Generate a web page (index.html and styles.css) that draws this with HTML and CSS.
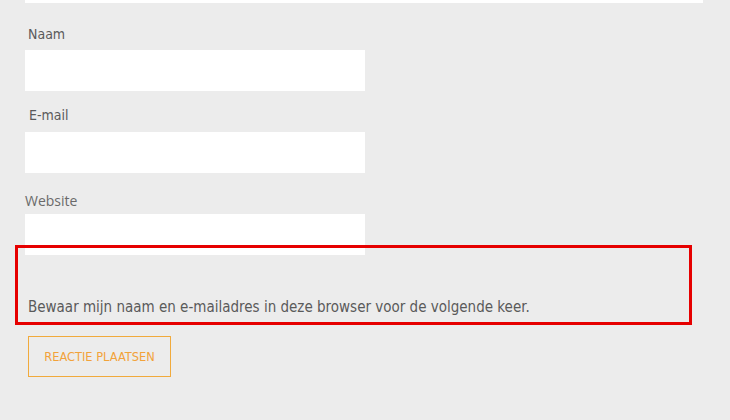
FILE: index.html
```html
<!DOCTYPE html>
<html lang="nl">
<head>
<meta charset="utf-8">
<link rel="stylesheet" href="styles.css">
<title>Reactie</title>
</head>
<body>
<form class="comment-form">
  <div class="textarea-end"></div>
  <div class="field field-naam">
    <label class="label label-naam">Naam</label>
    <input class="input" type="text">
  </div>
  <div class="field field-email">
    <label class="label label-email">E-mail</label>
    <input class="input" type="text">
  </div>
  <div class="field field-website">
    <label class="label label-website">Website</label>
    <input class="input" type="text">
  </div>
  <p class="cookies">Bewaar mijn naam en e-mailadres in deze browser voor de volgende keer.</p>
  <button class="submit" type="button">REACTIE PLAATSEN</button>
  <div class="highlight"></div>
</form>
</body>
</html>
```
FILE: styles.css
```css
html, body {
  margin: 0;
  padding: 0;
  background: #ececec;
}
body {
  width: 730px;
  height: 420px;
  overflow: hidden;
  font-family: "DejaVu Sans Condensed", "DejaVu Sans", sans-serif;
  color: #5a5a5a;
}
.comment-form {
  position: relative;
  padding-left: 25px;
  display: flex;
  flex-direction: column;
  align-items: flex-start;
}
.textarea-end {
  width: 678px;
  height: 3px;
  background: #ffffff;
}
.field {
  display: flex;
  flex-direction: column;
  align-items: flex-start;
}
.field-naam { margin-top: 23px; }
.field-email { margin-top: 16px; }
.field-website { margin-top: 20px; }
.label {
  font-size: 14px;
  line-height: 16px;
  height: 16px;
  margin-bottom: 8px;
}
.label-naam { margin-left: 3px; }
.label-email { margin-left: 4px; margin-bottom: 9px; }
.label-website {
  font-family: "Open Sans", sans-serif;
  color: #6a6a6a;
  margin-bottom: 5px;
}
.input {
  width: 340px;
  height: 41px;
  box-sizing: border-box;
  border: none;
  background: #ffffff;
  margin: 0;
  padding: 0;
}
.cookies {
  margin: 44px 0 0 3px;
  font-size: 15px;
  line-height: 16px;
  color: #5a5a5a;
}
.submit {
  margin: 21px 0 0 3px;
  width: 143px;
  height: 41px;
  box-sizing: border-box;
  border: 1px solid #f1aa3c;
  background: transparent;
  color: #f2a23a;
  font-family: "DejaVu Sans Condensed", "DejaVu Sans", sans-serif;
  font-size: 12.7px;
  padding: 0;
}
.highlight {
  position: absolute;
  left: 15px;
  top: 245px;
  width: 677px;
  height: 80px;
  box-sizing: border-box;
  border: 3px solid #e60000;
  pointer-events: none;
}
```
